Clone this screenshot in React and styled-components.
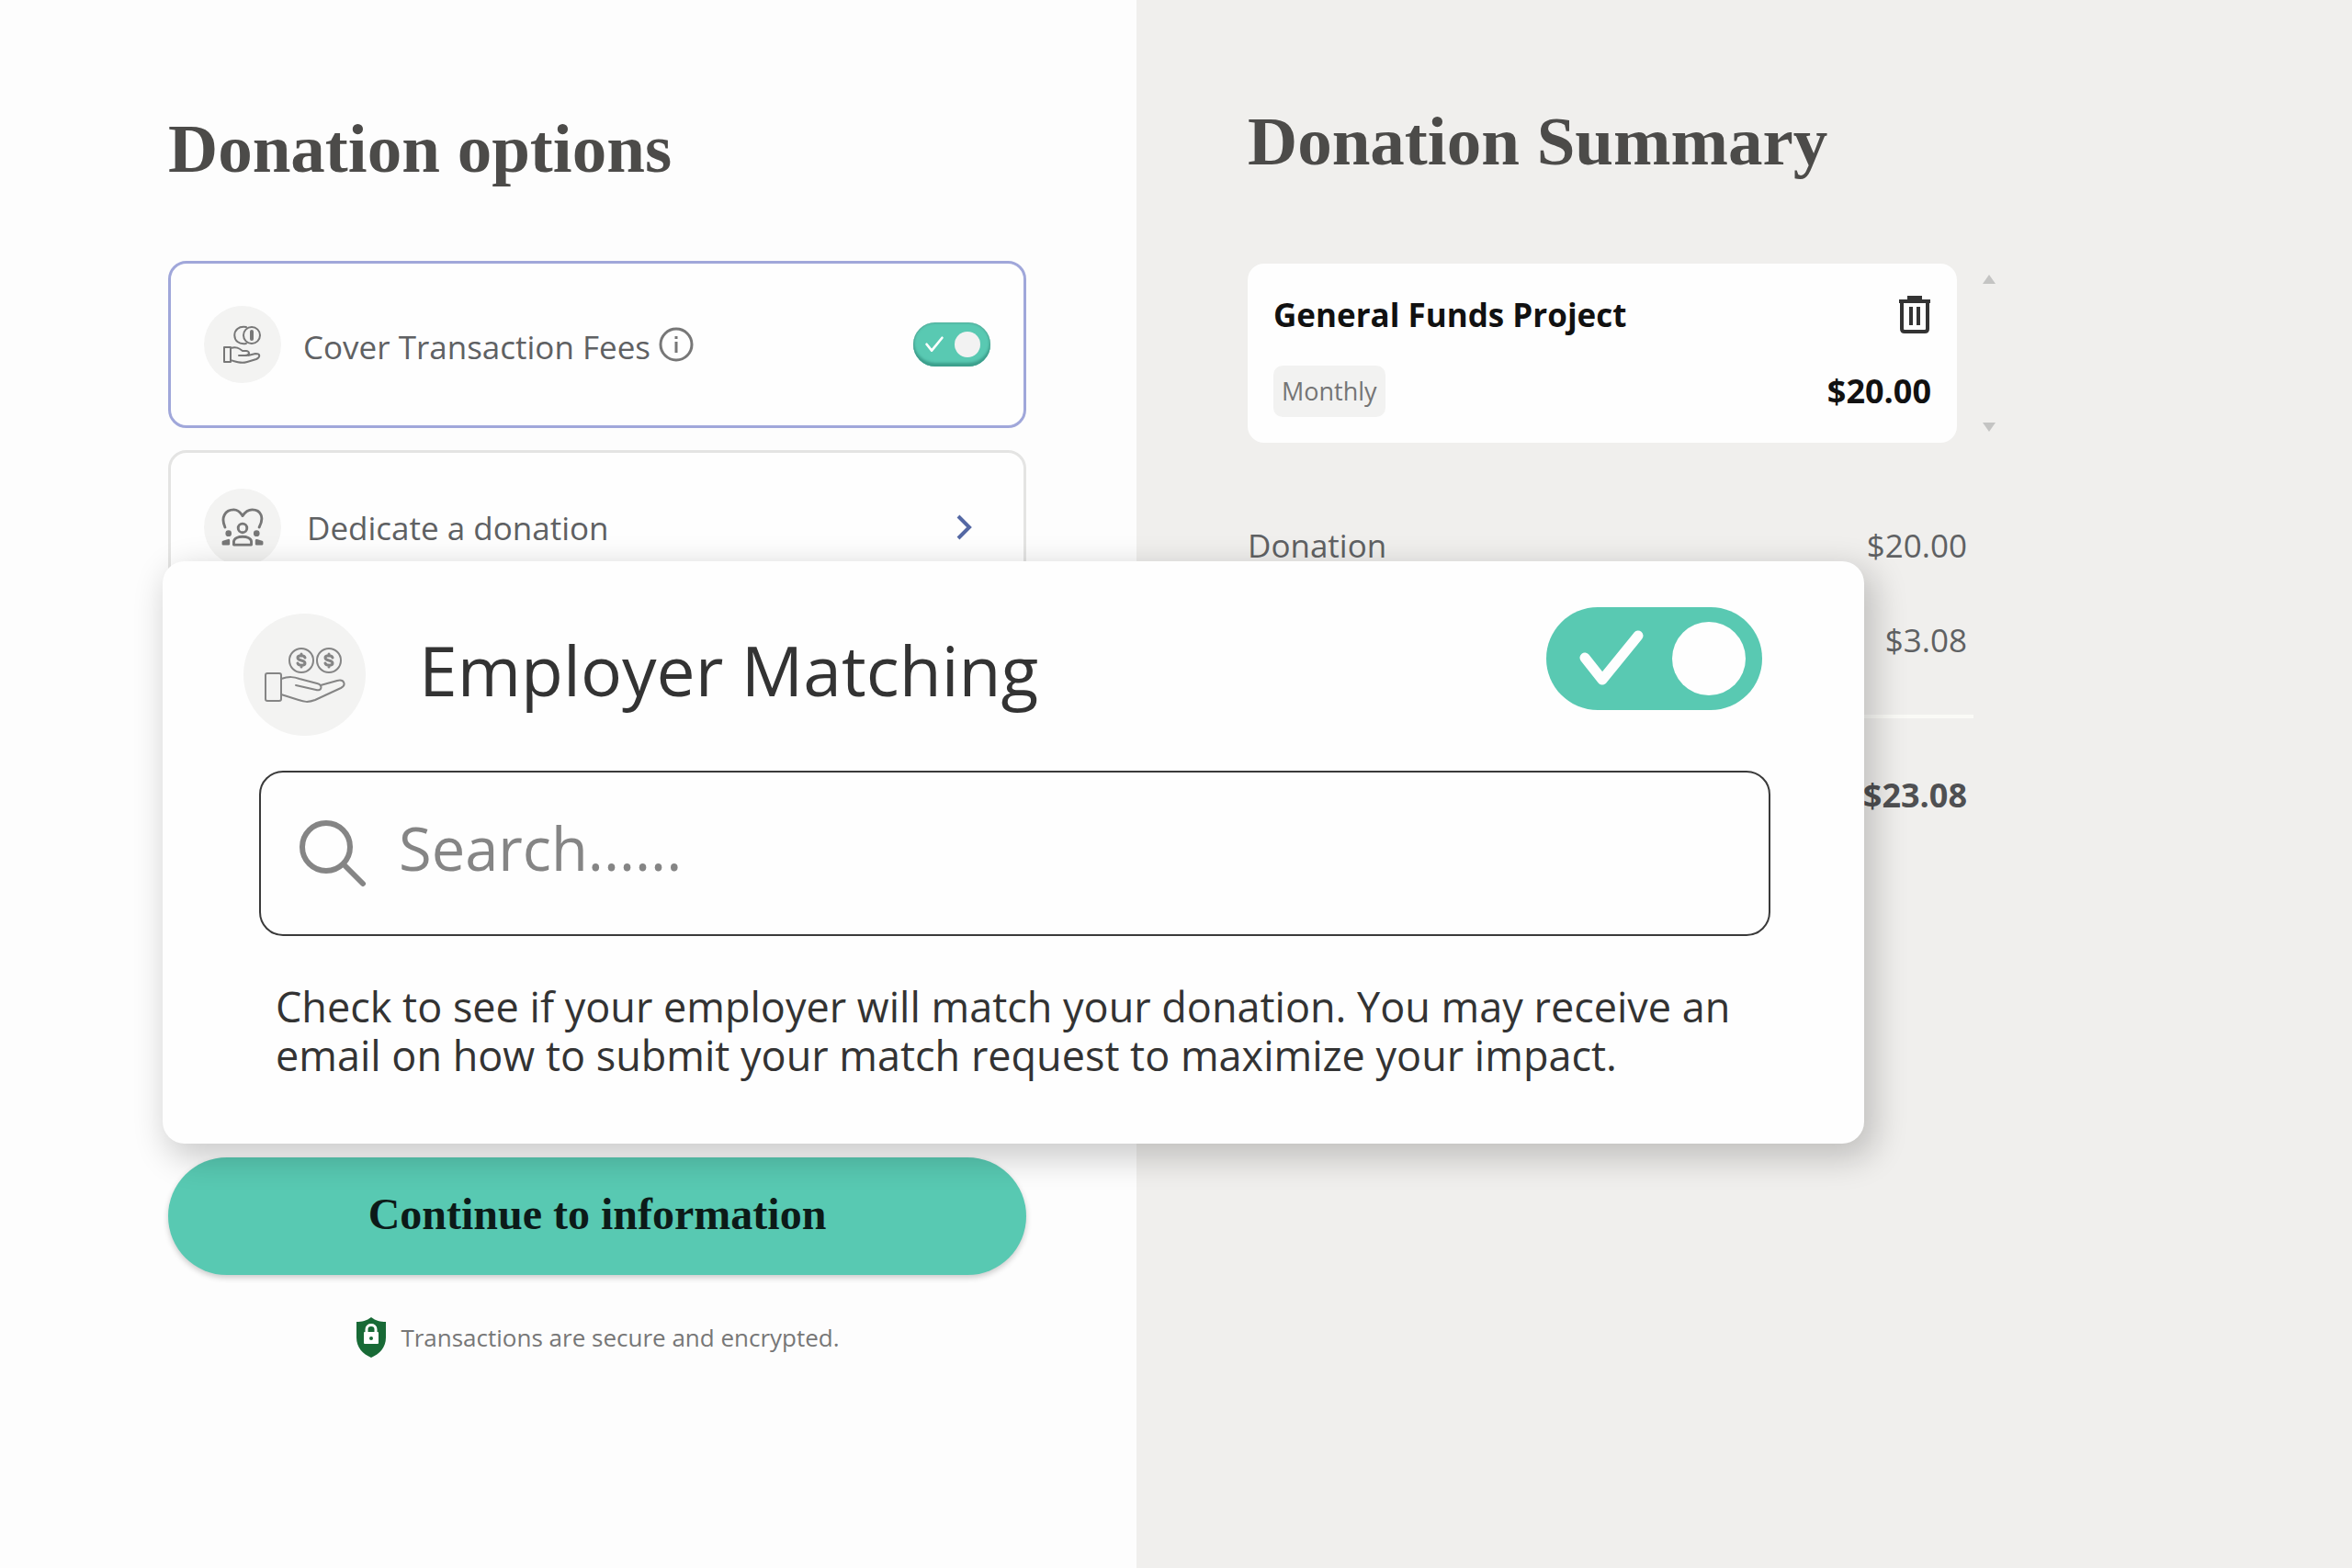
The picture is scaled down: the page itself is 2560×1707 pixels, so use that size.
import React, {useState} from 'react';
import styled, {createGlobalStyle} from 'styled-components';

const GlobalStyle = createGlobalStyle`
  *{
    box-sizing: border-box;
  }
  body{
    margin: 0;
    background: #fdfdfd;
    font-family: 'Open Sans', 'Noto Sans', sans-serif;
    color: #5f6163;
  }
  h1, h2, h3, p, dl, dd{
    margin: 0;
  }
  button, input{
    font: inherit;
    color: inherit;
  }
`

const Page = styled.main`
  position: relative;
  display: grid;
  grid-template-columns: 1237fr 1323fr;
  min-height: 100vh;
`

const OptionsPanel = styled.section`
  padding: 120px 120px 120px 183px;
  background: #fdfdfd;
`

const SummaryPanel = styled.section`
  padding: 112px 388px 120px 121px;
  background: #f0efed;
`

const Title = styled.h1`
  font-family: 'Liberation Serif', serif;
  font-size: 75px;
  line-height: 84px;
  font-weight: 700;
  color: #4c4b49;
  white-space: nowrap;
`

const OptionList = styled.div`
  display: flex;
  flex-direction: column;
  gap: 24px;
  height: 1056px;
  padding-top: 80px;
`

const Option = styled.div`
  display: flex;
  align-items: center;
  height: ${props => props.$active ? '182px' : '168px'};
  padding: 0 36px;
  border: 3px solid ${props => props.$active ? '#a0a7da' : '#e4e4e3'};
  border-radius: 20px;
  background: #fefefe;
  font-size: 35px;
`

const OptionLabel = styled.label`
  margin-left: 24px;
  padding-top: 4px;
  white-space: nowrap;
`

const OptionLink = styled.button`
  display: flex;
  flex: 1;
  align-items: center;
  justify-content: space-between;
  margin-left: 28px;
  padding: 0 20px 0 0;
  border: 0;
  background: none;
  text-align: left;
`

const InfoButton = styled.button`
  display: flex;
  margin: 0 auto 0 8px;
  padding: 0;
  border: 0;
  background: none;
`

const IconCircle = styled.span`
  display: flex;
  flex: none;
  align-items: center;
  justify-content: center;
  width: ${props => props.$size}px;
  height: ${props => props.$size}px;
  border-radius: 50%;
  background: #f3f3f2;
`

const Switch = styled.span`
  position: relative;
  display: flex;
  flex: none;
  align-items: center;
  justify-content: space-between;
  width: ${props => props.$large ? '235px' : '84px'};
  height: ${props => props.$large ? '112px' : '48px'};
  padding: ${props => props.$large ? '0 18px 0 36px' : '0 11px 0 12px'};
  border-radius: 56px;
  background: ${props => props.$on ? '#59c9b2' : '#b9bdbc'};
  box-shadow: ${props => props.$large ? 'none' : 'inset 0 -4px 3px #3c9f8c, inset 0 0 3px #4a8d80'};

  input{
    position: absolute;
    inset: 0;
    width: 100%;
    height: 100%;
    margin: 0;
    opacity: 0;
  }
`

const Knob = styled.span`
  width: ${props => props.$large ? '80px' : '28px'};
  height: ${props => props.$large ? '80px' : '28px'};
  border-radius: 50%;
  background: ${props => props.$large ? '#fefefe' : '#f2f2f2'};
`

const ContinueButton = styled.button`
  display: block;
  width: 100%;
  height: 128px;
  padding: 0 0 6px;
  border: 0;
  border-radius: 64px;
  background: #58c9b2;
  box-shadow: 0 3px 6px rgba(0, 0, 0, 0.2);
  font-family: 'Liberation Serif', serif;
  font-size: 48px;
  font-weight: 700;
  color: #0c1a18;
`

const Secure = styled.p`
  display: flex;
  align-items: center;
  justify-content: center;
  gap: 14px;
  margin-top: 44px;
  font-size: 26px;
  line-height: 48px;
  color: #777;
  white-space: nowrap;
`

const CartRow = styled.div`
  display: flex;
  align-items: stretch;
  gap: 28px;
  margin-top: 91px;
`

const CartItem = styled.article`
  display: grid;
  flex: 1;
  grid-template-columns: 1fr auto;
  align-items: center;
  row-gap: 24px;
  height: 195px;
  padding: 28px 28px 24px;
  border-radius: 18px;
  background: #fefefe;
  color: #111;
`

const ItemName = styled.h2`
  font-size: 35px;
  line-height: 48px;
  font-weight: 700;
  white-space: nowrap;
`

const IconButton = styled.button`
  display: flex;
  justify-self: end;
  padding: 0;
  border: 0;
  background: none;
`

const Frequency = styled.span`
  justify-self: start;
  padding: 0 9px;
  border-radius: 10px;
  background: #f2f2f1;
  font-size: 27px;
  line-height: 56px;
  color: #757575;
`

const Price = styled.strong`
  font-size: 36px;
  line-height: 48px;
`

const ScrollArrows = styled.div`
  display: flex;
  flex-direction: column;
  justify-content: space-between;
  padding: 12px 0;
`

const Totals = styled.dl`
  display: flex;
  flex-direction: column;
  margin: 84px 24px 0 0;
  font-size: 35px;
  line-height: 56px;
`

const TotalRow = styled.div`
  display: flex;
  justify-content: space-between;
  padding: 0 7px 47px 0;
  ${props => props.$total && `
    margin-top: 6px;
    padding-top: 56px;
    border-top: 4px solid #fafaf6;
    font-size: 36px;
    font-weight: 700;
    color: #4f5052;
  `}
`

const MatchCard = styled.section`
  position: absolute;
  top: 611px;
  left: 177px;
  width: 72.35%;
  height: 634px;
  padding: 50px 102px 0 105px;
  border-radius: 24px;
  background: #fefefe;
  box-shadow: 8px 12px 36px 4px rgba(0, 0, 0, 0.2);
  color: #333;
`

const MatchHeader = styled.div`
  display: flex;
  align-items: flex-start;
  justify-content: space-between;
  margin: 0 9px 0 -17px;
`

const MatchTitle = styled.h2`
  display: flex;
  align-items: center;
  gap: 58px;
  padding-top: 7px;
  font-size: 75px;
  line-height: 100px;
  font-weight: 400;
  white-space: nowrap;

  label{
    padding-bottom: 12px;
  }
`

const SearchBox = styled.label`
  display: flex;
  align-items: center;
  gap: 34px;
  height: 180px;
  margin-top: 38px;
  padding: 0 42px;
  border: 2px solid #3a3a3a;
  border-radius: 26px;

  input{
    flex: 1;
    min-width: 0;
    padding: 0 0 12px;
    border: 0;
    outline: 0;
    background: none;
    font-size: 65px;
  }
  input::placeholder{
    color: #858585;
    opacity: 1;
  }
`

const MatchText = styled.p`
  margin: 50px 0 0 18px;
  font-size: 45px;
  line-height: 53px;
`

const Check = ({large}) => (
  <svg width={large ? 70 : 22} height={large ? 62 : 18} viewBox="0 0 70 62" fill="none" stroke="#fefefe" strokeWidth={large ? 11 : 9} strokeLinecap="round" strokeLinejoin="round">
    <path d="M6 30 L25 54 L64 6" />
  </svg>
)

const Toggle = ({id, large}) => {
  const [on, setOn] = useState(true)

  return (
    <Switch $large={large} $on={on}>
      <input id={id} type="checkbox" role="switch" checked={on} onChange={() => setOn(!on)} />
      <Check large={large} />
      <Knob $large={large} />
    </Switch>
  )
}

const Dollar = () => (
  <path d="M4 -3 C3 -6 -4 -6 -4 -3 C-4 1 4 -1 4 3 C4 6 -3 6 -4 3 M0 -7 V-5 M0 5 V7" strokeWidth="3" />
)

const MatchIcon = () => (
  <svg width="88" height="60" viewBox="0 0 88 60" fill="none" stroke="#858585" strokeWidth="2" strokeLinejoin="round" strokeLinecap="round">
    <circle cx="40" cy="14" r="13" />
    <circle cx="70" cy="14" r="13" />
    <g transform="translate(40 14)"><Dollar /></g>
    <g transform="translate(70 14)"><Dollar /></g>
    <rect x="1" y="28" width="17" height="30" rx="2" />
    <path d="M18 34 C27 31 32 32 38 34 L57 39 C64 41 62 48 56 46 L34 41 M61 41 L79 36 C87 34 89 41 83 44 L55 57 C47 60 43 59 37 57 L18 51" />
  </svg>
)

const FeesIcon = () => (
  <svg width="44" height="44" viewBox="0 0 44 44" fill="none" stroke="#777" strokeWidth="2" strokeLinejoin="round" strokeLinecap="round">
    <circle cx="32" cy="12" r="9" />
    <path d="M26 3 C9 0 9 24 26 21" />
    <path d="M32 8 V16" strokeWidth="4" />
    <path d="M2 25 H9 V41 H2 Z M9 26 C15 24 18 26 22 29 H26 C31 30 29 34 25 34 H18 M28 34 L36 32 C42 32 41 36 37 38 L27 41 C20 43 15 41 9 39" />
  </svg>
)

const DedicateIcon = () => (
  <svg width="48" height="42" viewBox="0 0 48 44" fill="none" stroke="#777" strokeWidth="3" strokeLinejoin="round" strokeLinecap="round">
    <path d="M4 22 C-1 11 4 2 14 2 C20 2 22 6 24 9 C26 6 29 2 35 2 C45 2 49 11 43 22" />
    <circle cx="24" cy="23" r="5" />
    <path d="M14 42 V38 C15 31 33 31 34 38 V42 Z" />
    <circle cx="8" cy="29" r="2" fill="#777" />
    <circle cx="40" cy="29" r="2" fill="#777" />
    <path d="M2 41 V39 L8 37 V41 Z M40 41 V37 L46 39 V41 Z" fill="#777" />
  </svg>
)

const InfoIcon = () => (
  <svg width="40" height="40" viewBox="0 0 40 40" fill="none" stroke="#777" strokeWidth="3">
    <circle cx="20" cy="20" r="17" />
    <path d="M20 17 V29 M20 11 V14" />
  </svg>
)

const TrashIcon = () => (
  <svg width="36" height="42" viewBox="0 0 36 42" fill="none" stroke="#333" strokeWidth="4">
    <path d="M1 6 H35 M12 4 V2 H24 V4 M4 6 V36 Q4 39 7 39 H29 Q32 39 32 36 V6 M14 12 V32 M22 12 V32" />
  </svg>
)

const ShieldIcon = () => (
  <svg width="36" height="46" viewBox="0 0 36 46">
    <path d="M18 1 C23 5 28 6 34 6 V23 C34 34 27 41 18 45 C9 41 2 34 2 23 V6 C8 6 13 5 18 1 Z" fill="#186a36" />
    <rect x="10" y="17" width="16" height="13" rx="1" fill="#fff" />
    <path d="M13 18 V14 C13 8 23 8 23 14 V18" fill="none" stroke="#fff" strokeWidth="3" />
    <circle cx="18" cy="24" r="2" fill="#186a36" />
  </svg>
)

const SearchIcon = () => (
  <svg width="74" height="74" viewBox="0 0 74 74" fill="none" stroke="#858585" strokeWidth="6" strokeLinecap="round">
    <circle cx="29" cy="30" r="26" />
    <path d="M48 49 L69 70" />
  </svg>
)

const App = () => {
  const [company, setCompany] = useState('')

  return (
    <>
      <GlobalStyle />
      <Page>
        <OptionsPanel>
          <Title>Donation options</Title>
          <OptionList>
            <Option $active>
              <IconCircle $size={84}><FeesIcon /></IconCircle>
              <OptionLabel htmlFor="fees">Cover Transaction Fees</OptionLabel>
              <InfoButton type="button" aria-label="About transaction fees"><InfoIcon /></InfoButton>
              <Toggle id="fees" />
            </Option>
            <Option>
              <IconCircle $size={84}><DedicateIcon /></IconCircle>
              <OptionLink type="button">
                Dedicate a donation
                <svg width="18" height="28" viewBox="0 0 18 28" fill="none" stroke="#5468a4" strokeWidth="4">
                  <path d="M3 2 L15 14 L3 26" />
                </svg>
              </OptionLink>
            </Option>
          </OptionList>
          <ContinueButton type="button">Continue to information</ContinueButton>
          <Secure><ShieldIcon />Transactions are secure and encrypted.</Secure>
        </OptionsPanel>

        <SummaryPanel>
          <Title>Donation Summary</Title>
          <CartRow>
            <CartItem>
              <ItemName>General Funds Project</ItemName>
              <IconButton type="button" aria-label="Remove donation"><TrashIcon /></IconButton>
              <Frequency>Monthly</Frequency>
              <Price>$20.00</Price>
            </CartItem>
            <ScrollArrows>
              <svg width="14" height="10" viewBox="0 0 14 10"><path d="M7 0 L14 10 H0 Z" fill="#c4c4c3" /></svg>
              <svg width="14" height="10" viewBox="0 0 14 10"><path d="M0 0 H14 L7 10 Z" fill="#c4c4c3" /></svg>
            </ScrollArrows>
          </CartRow>
          <Totals>
            <TotalRow><dt>Donation</dt><dd>$20.00</dd></TotalRow>
            <TotalRow><dt>Fees</dt><dd>$3.08</dd></TotalRow>
            <TotalRow $total><dt>Total</dt><dd>$23.08</dd></TotalRow>
          </Totals>
        </SummaryPanel>

        <MatchCard>
          <MatchHeader>
            <MatchTitle>
              <IconCircle $size={133}><MatchIcon /></IconCircle>
              <label htmlFor="matching">Employer Matching</label>
            </MatchTitle>
            <Toggle id="matching" large />
          </MatchHeader>
          <SearchBox>
            <SearchIcon />
            <input type="search" aria-label="Search employers" placeholder="Search......" value={company} onChange={e => setCompany(e.target.value)} />
          </SearchBox>
          <MatchText>
            Check to see if your employer will match your donation. You may receive an email on how to submit your match request to maximize your impact.
          </MatchText>
        </MatchCard>
      </Page>
    </>
  );
}

export default App;
